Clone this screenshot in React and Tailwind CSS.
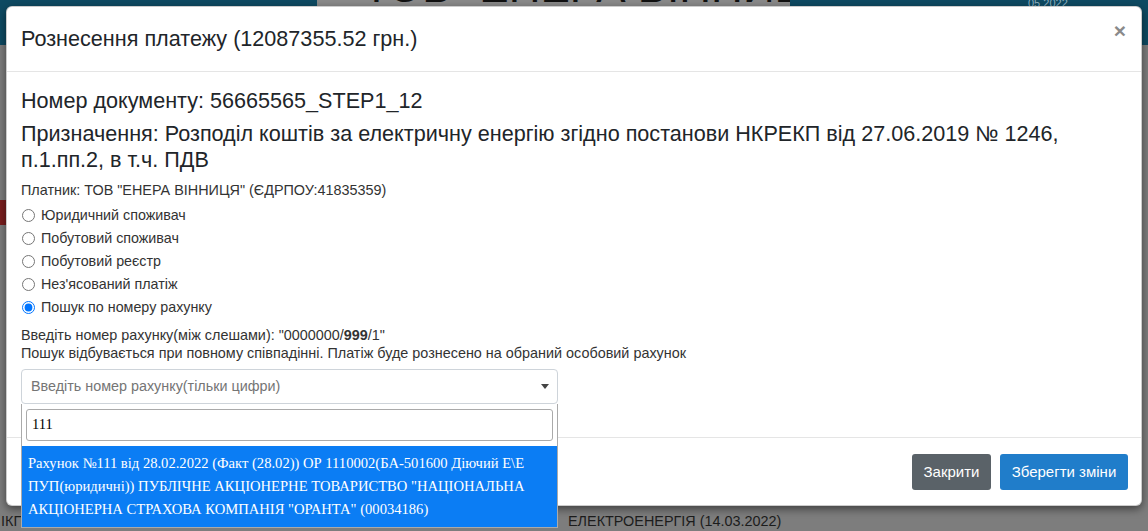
export default function App() {
  const radios = [
    ["Юридичний споживач", false],
    ["Побутовий споживач", false],
    ["Побутовий реєстр", false],
    ["Нез'ясований платіж", false],
    ["Пошук по номеру рахунку", true],
  ];
  return (
    <div className="relative h-[531px] w-[1148px] overflow-hidden bg-[#7d7d7d] font-['Liberation_Sans',Arial,sans-serif]">
      {/* dimmed background page */}
      <div className="flex h-[45px] bg-[#0e4a62]">
        <div className="w-[317px]" />
        <div className="w-[473px] overflow-hidden bg-[#8a8a8a]">
          <div className="-mt-[35px] pl-[46px] text-[44px] leading-[44px] whitespace-nowrap text-[#111]">
            ТОВ "ЕНЕРА ВІННИЦЯ"
          </div>
        </div>
        <div className="flex-1 overflow-hidden pl-[238px] text-[11px] leading-[6px] text-[#8fb0c0]">05.2022</div>
      </div>
      <div className="h-[155px]" />
      <div className="h-[25px] w-[10px] bg-[#7a1e1e]" />
      <div className="h-[280px]" />
      <div className="flex h-[26px] pt-[8px] text-[14.4px] leading-[16px] text-[#1c1c1c]">
        <span className="w-[568px] pl-[1px]">ІКП</span>
        <span>ЕЛЕКТРОЕНЕРГІЯ (14.03.2022)</span>
      </div>

      {/* modal */}
      <div className="absolute inset-0 px-[6px] pt-[6px]">
        <div className="rounded-[6px] border border-black/20 bg-white text-[#212529] shadow-[0_3px_9px_rgba(0,0,0,0.5)]">
          <div className="flex h-[65px] items-center justify-between border-b border-[#e5e5e5] pl-[14px] pr-[15px]">
            <div className="text-[21.6px] leading-[28px]">Рознесення платежу (12087355.52 грн.)</div>
            <span className="mb-[17px] text-[21px] leading-[21px] font-bold text-[#8a8a8a]">×</span>
          </div>

          <div className="px-[14px] pt-[16px] pb-[33px]">
            <div className="mb-[7px] text-[21.6px] leading-[26px]">Номер документу: 56665565_STEP1_12</div>
            <div className="mb-[8px] text-[21.6px] leading-[26px]">
              Призначення: Розподіл коштів за електричну енергію згідно постанови НКРЕКП від 27.06.2019 № 1246, п.1.пп.2, в т.ч. ПДВ
            </div>
            <div className="text-[14.4px] leading-[18px] text-[#333]">Платник: ТОВ "ЕНЕРА ВІННИЦЯ" (ЄДРПОУ:41835359)</div>
            <div className="mt-[5px] flex flex-col">
              {radios.map(([label, checked]) => (
                <label key={label} className="flex h-[23px] items-center text-[14.3px] text-[#333]">
                  <input
                    type="radio"
                    name="kind"
                    defaultChecked={checked}
                    className="m-0 ml-[1px] mr-[6px] h-[13px] w-[13px]"
                  />
                  {label}
                </label>
              ))}
            </div>
            <div className="mt-[7px] text-[14.4px] leading-[18px] text-[#333]">
              <div>
                Введіть номер рахунку(між слешами): "0000000/<b>999</b>/1"
              </div>
              <div>Пошук відбувається при повному співпадінні. Платіж буде рознесено на обраний особовий рахунок</div>
            </div>
            <div className="relative mt-[7px] w-[537px]">
              <div className="flex h-[35px] items-center justify-between rounded-[4px] border border-[#ced4da] pl-[9px] pr-[8px] text-[14.35px] text-[#757575]">
                <span>Введіть номер рахунку(тільки цифри)</span>
                <span className="h-0 w-0 border-x-[4px] border-t-[5px] border-x-transparent border-t-[#444]" />
              </div>
              <div className="absolute left-0 top-full z-10 w-full border border-t-0 border-[#aaa] bg-white">
                <div className="px-[4px] pt-[5px] pb-[5px]">
                  <div className="flex h-[32px] items-center rounded-[3px] border border-[#aaa] pl-[5px] font-['Liberation_Serif',serif] text-[14.5px] text-black">
                    111
                  </div>
                </div>
                <div className="bg-[#0b7df4] px-[6px] py-[6px] font-['Liberation_Serif',serif] text-[14.6px] leading-[23px] text-white">
                  Рахунок №111 від 28.02.2022 (Факт (28.02)) ОР 1110002(БА-501600 Діючий Е\Е ПУП(юридичні)) ПУБЛІЧНЕ АКЦІОНЕРНЕ ТОВАРИСТВО "НАЦІОНАЛЬНА АКЦІОНЕРНА СТРАХОВА КОМПАНІЯ "ОРАНТА" (00034186)
                </div>
              </div>
            </div>
          </div>

          <div className="flex justify-end gap-[9px] border-t border-[#e5e5e5] pt-[16px] pb-[15px] pr-[13px]">
            <button className="h-[36px] w-[79px] rounded-[3px] bg-[#5a6268] text-[15px] text-white">Закрити</button>
            <button className="h-[36px] w-[128px] rounded-[3px] bg-[#207dca] text-[15px] text-white">Зберегти зміни</button>
          </div>
        </div>
      </div>
    </div>
  );
}
